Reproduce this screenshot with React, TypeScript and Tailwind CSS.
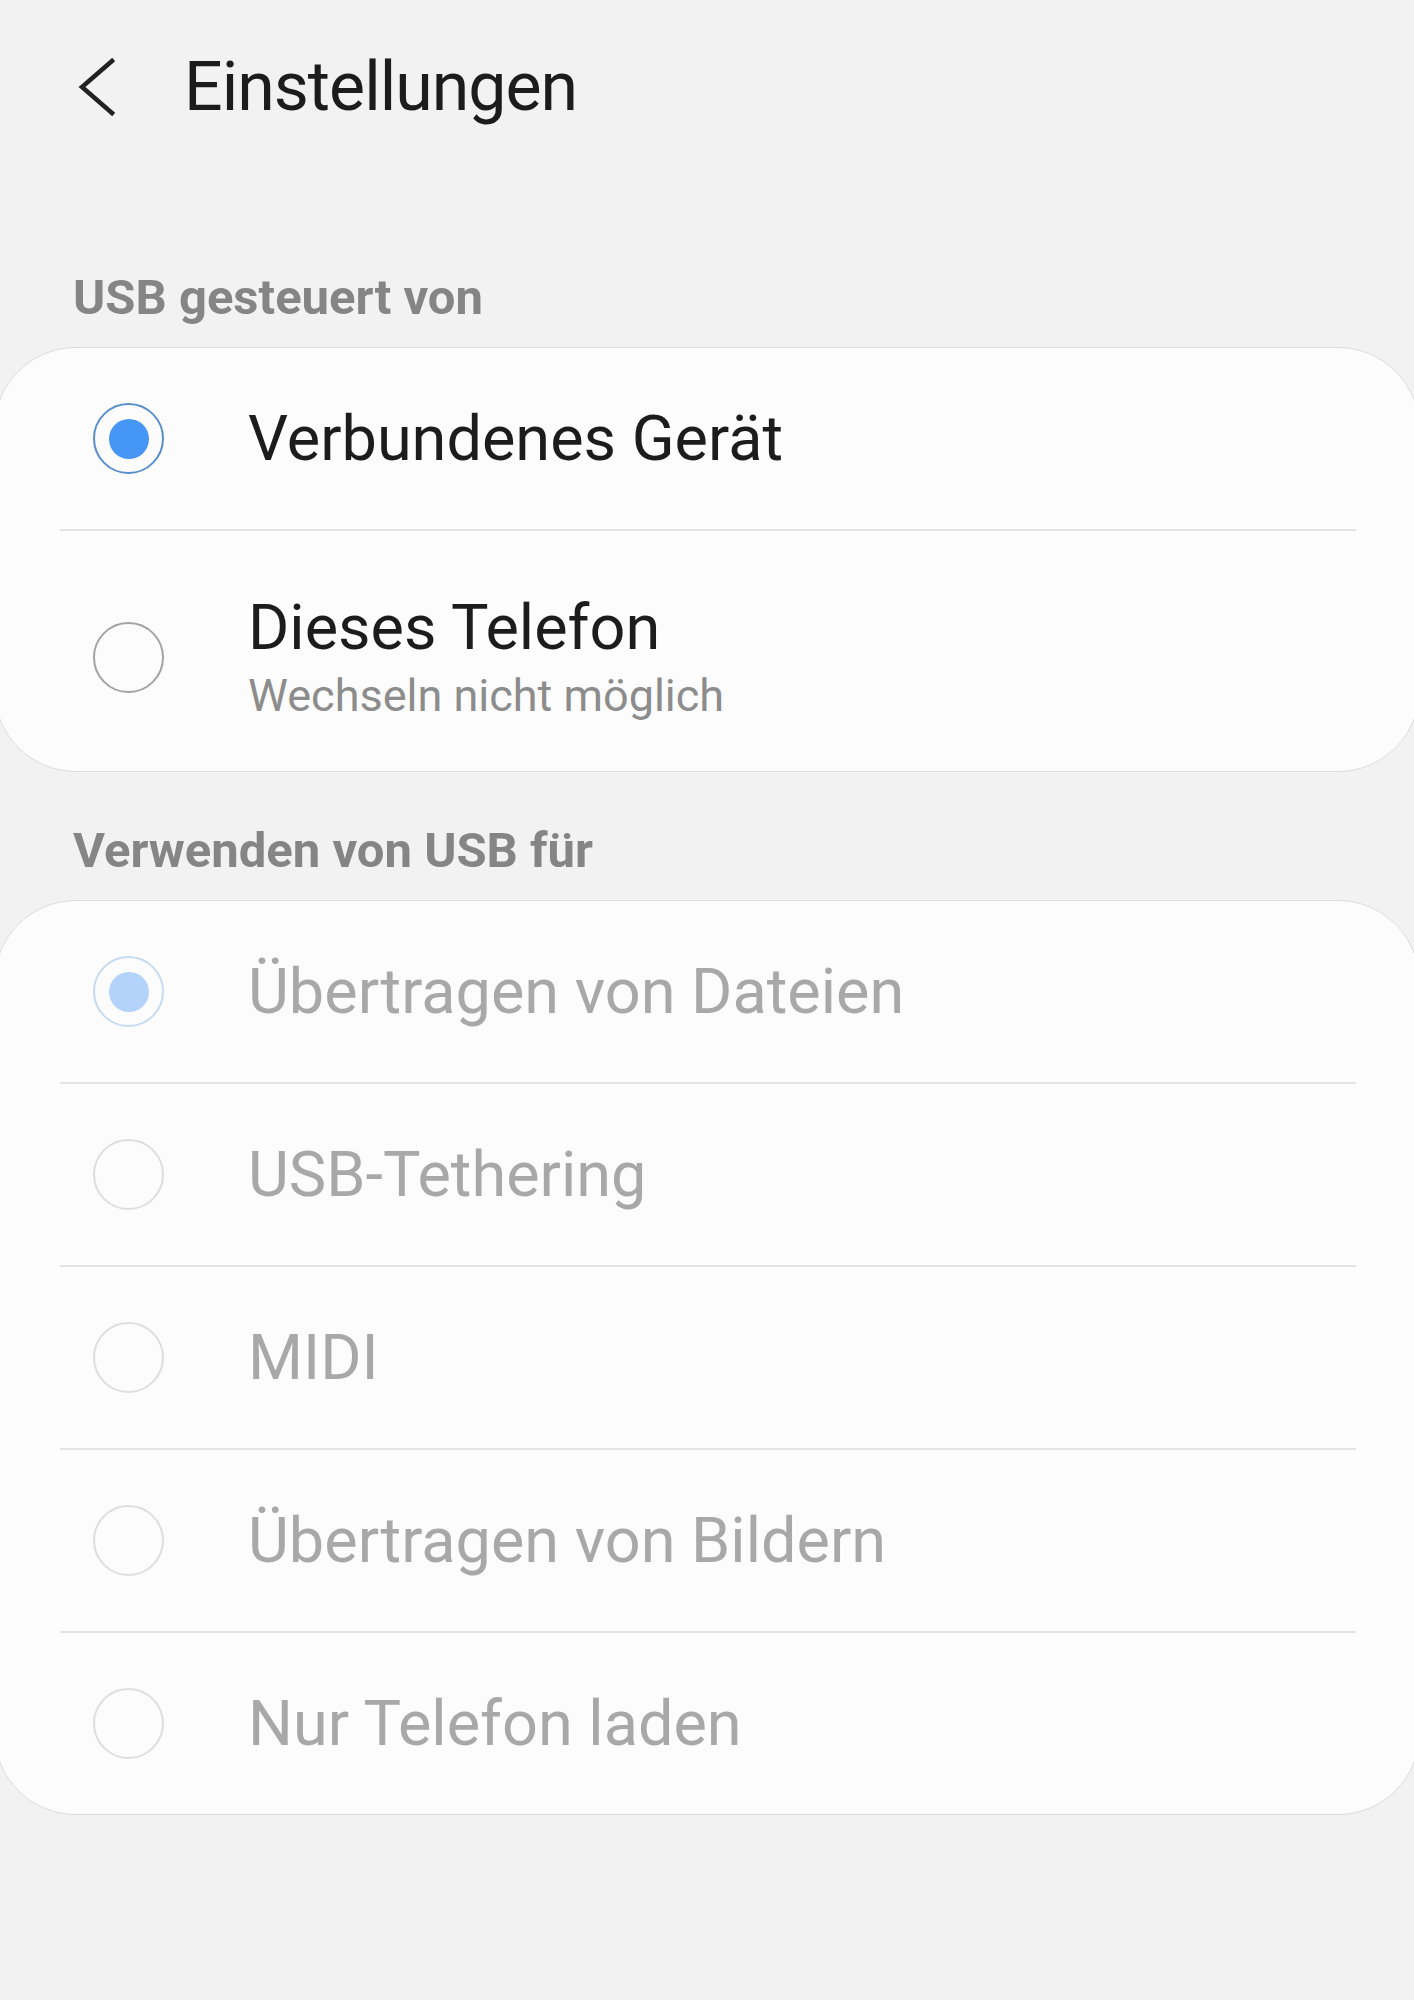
import React from 'react';

type Option = {
  label: string;
  sub?: string;
  checked?: boolean;
};

function Radio({ checked, disabled }: { checked?: boolean; disabled?: boolean }) {
  const ring = disabled
    ? checked
      ? 'border-[#c6dbf1]'
      : 'border-[#dedede]'
    : checked
      ? 'border-[#5a8fcb]'
      : 'border-[#a3a3a3]';
  return (
    <div className={`flex h-[71px] w-[71px] shrink-0 items-center justify-center rounded-full border-2 ${ring}`}>
      {checked && (
        <div className={`h-[40px] w-[40px] rounded-full ${disabled ? 'bg-[#b4d3fa]' : 'bg-[#4596f5]'}`} />
      )}
    </div>
  );
}

function Card({ items, disabled }: { items: Option[]; disabled?: boolean }) {
  return (
    <div className="-mx-[6px] rounded-[82px] border border-[#dcdcdc] bg-[#fcfcfc]">
      {items.map((item, i) => (
        <div key={item.label}>
          {i > 0 && <div className="ml-[65px] mr-[63px] h-[2px] bg-[#e4e4e4]" />}
          <div
            className={`flex items-center pl-[98px] ${item.sub ? 'h-[240px] pt-[12px]' : 'h-[181px]'}`}
          >
            <Radio checked={item.checked} disabled={disabled} />
            <div className="ml-[84px] flex flex-col">
              <span
                className={`text-[63px] leading-[74px] ${disabled ? 'text-[#a8a8a8]' : 'text-[#1c1c1c]'}`}
              >
                {item.label}
              </span>
              {item.sub && (
                <span className="mt-[4px] text-[45px] leading-[54px] text-[#8c8c8c]">
                  {item.sub}
                </span>
              )}
            </div>
          </div>
        </div>
      ))}
    </div>
  );
}

export default function App() {
  const controlled: Option[] = [
    { label: 'Verbundenes Gerät', checked: true },
    { label: 'Dieses Telefon', sub: 'Wechseln nicht möglich' },
  ];

  const usage: Option[] = [
    { label: 'Übertragen von Dateien', checked: true },
    { label: 'USB-Tethering' },
    { label: 'MIDI' },
    { label: 'Übertragen von Bildern' },
    { label: 'Nur Telefon laden' },
  ];

  return (
    <div
      className="min-h-[2000px] overflow-x-hidden bg-[#f2f2f2]"
      style={{ fontFamily: 'Roboto, "Noto Sans", sans-serif' }}
    >
      {/* Kopfzeile */}
      <div className="flex items-center pt-[47px]">
        <svg width="50" height="64" viewBox="0 0 50 64" className="ml-[68px]" fill="none">
          <path d="M44 6 L14 32 L44 58" stroke="#222" strokeWidth="4.5" strokeLinecap="square" />
        </svg>
        <h1 className="ml-[66px] text-[68px] leading-[80px] tracking-[-1px] text-[#1c1c1c]">Einstellungen</h1>
      </div>

      <h2 className="mt-[142px] pl-[73px] text-[49px] font-bold leading-[58px] text-[#858585]">
        USB gesteuert von
      </h2>
      <div className="mt-[20px]">
        <Card items={controlled} />
      </div>

      <h2 className="mt-[50px] pl-[73px] text-[49px] font-bold leading-[58px] text-[#858585]">
        Verwenden von USB für
      </h2>
      <div className="mt-[20px]">
        <Card items={usage} disabled />
      </div>
    </div>
  );
}
